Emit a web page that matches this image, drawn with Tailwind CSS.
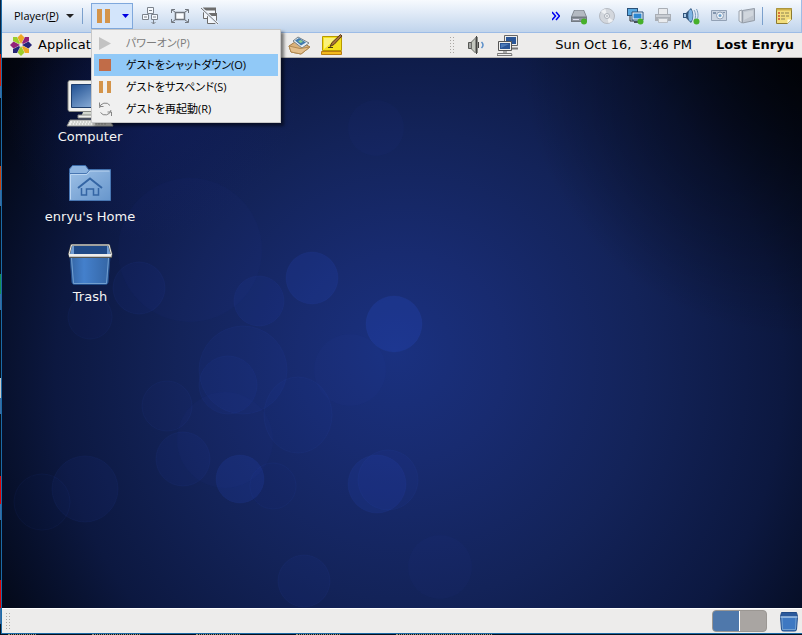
<!DOCTYPE html>
<html lang="ja">
<head>
    <meta charset="UTF-8">
    <meta name="viewport" content="width=device-width, initial-scale=1.0">
    <title>Player</title>
    <script src="https://cdn.jsdelivr.net/npm/@tailwindcss/browser@4"></script>
</head>
<body class="h-screen flex flex-col overflow-hidden bg-[#07101c] font-['DejaVu_Sans',sans-serif] text-[13px] text-black">
    <div class="flex flex-1 min-h-0">

        <!-- sliver of the host desktop -->
        <div class="w-px flex flex-col">
            <div class="h-[54px] bg-[#0b2340]"></div>
            <div class="h-8 bg-[#d81e05]"></div>
            <div class="h-3 bg-[#3a6ea5]"></div>
            <div class="h-[68px]"></div>
            <div class="h-6 bg-[#c8400a]"></div>
            <div class="h-4 bg-[#3a6ea5]"></div>
            <div class="h-[68px]"></div>
            <div class="h-5 bg-[#159050]"></div>
            <div class="h-4 bg-[#3a6ea5]"></div>
            <div class="h-[68px]"></div>
            <div class="h-5 bg-[#c8c8c8]"></div>
            <div class="h-4 bg-[#3a6ea5]"></div>
            <div class="h-[62px]"></div>
            <div class="h-7 bg-[#e00000]"></div>
            <div class="h-4 bg-[#3a6ea5]"></div>
            <div class="h-[60px]"></div>
            <div class="h-7 bg-[#e00000]"></div>
            <div class="h-4 bg-[#3a6ea5]"></div>
        </div>

        <div class="flex-1 min-w-0 flex flex-col border-l border-b border-[#1b6ba8]">

            <!-- player toolbar -->
            <header class="h-[33px] shrink-0 flex items-center justify-between pr-2 border-b border-r border-[#9dbce6] bg-linear-to-b from-[#f7fafe] to-[#c0d4ec]">
                <div class="flex items-center h-full">
                    <button class="flex items-center gap-[7px] pl-3 font-['Open_Sans',sans-serif] text-[11px]">
                        <span>Player(<u>P</u>)</span>
                        <svg class="w-2 h-1" viewBox="0 0 8 4"><path d="M0 0h8L4 4z" fill="#222"/></svg>
                    </button>
                    <div class="w-px h-4 mx-2 bg-[#7ba0cc]"></div>
                    <div class="relative">
                        <button class="flex items-center w-[42px] h-[26px] gap-3 pl-[5px] border border-[#7fa8dc] bg-[#d3e5fb]" aria-label="Power">
                            <svg class="w-[13px] h-3.5" viewBox="0 0 13 14"><path d="M0 0h5v14H0zM8 0h5v14H8z" fill="#d4944a"/></svg>
                            <svg class="w-[7px] h-1" viewBox="0 0 7 4"><path d="M0 0h7L3.500 4z" fill="#0000e0"/></svg>
                        </button>
                        <div class="absolute z-10 left-0 top-[26px] w-[190px] p-0.5 flex flex-col border border-[#c8c8c8] bg-[#f0f0f0] shadow-[3px_3px_3px_rgba(0,0,0,0.5)] font-['Open_Sans','Noto_Sans_CJK_JP',sans-serif] text-[11px] leading-[22px] [font-feature-settings:'palt']" role="menu">
                            <button class="flex items-center gap-3 px-1 text-[#7d7d7d]" role="menuitem" disabled>
                                <svg class="w-4 h-4" viewBox="0 0 16 16"><path d="M1 2l12 6.500L1 15z" fill="#c3c3c3"/></svg>
                                <span>パワーオン(P)</span>
                            </button>
                            <button class="flex items-center gap-3 px-1 bg-[#91c9f7]" role="menuitem">
                                <svg class="w-4 h-4" viewBox="0 0 16 16"><path d="M1 2h12v12H1z" fill="#c16c48"/></svg>
                                <span>ゲストをシャットダウン(O)</span>
                            </button>
                            <button class="flex items-center gap-3 px-1" role="menuitem">
                                <svg class="w-4 h-4" viewBox="0 0 16 16"><path d="M1 2h4v12H1zM9 2h4v12H9z" fill="#d4944a"/></svg>
                                <span>ゲストをサスペンド(S)</span>
                            </button>
                            <button class="flex items-center gap-3 px-1" role="menuitem">
                                <svg class="w-4 h-4" viewBox="0 0 16 16" fill="none" stroke="#858585"><path d="M1.500 7A5.800 5.800 0 0 1 12 4.500M1.500 1.500v4h4M13 9A5.800 5.800 0 0 1 2.500 11.500M13.500 15v-4h-4"/></svg>
                                <span>ゲストを再起動(R)</span>
                            </button>
                        </div>
                    </div>
                    <div class="flex items-center gap-3 pl-2">
                        <button aria-label="Ctrl+Alt+Del">
                            <svg class="w-[18px] h-[18px]" viewBox="0 0 18 18" fill="#f6f9fd" stroke="#7c838c"><path d="M6.500.5h6v6h-6zM1.500 7.500h6v5h-6zM10.500 7.500h6v5h-6z"/><path d="M8 3.500h3M3 10h3M12 10h3M12.500 13v4M10.500 15l2 2 2-2" fill="none"/></svg>
                        </button>
                        <button aria-label="Full screen">
                            <svg class="w-[18px] h-[18px]" viewBox="0 0 18 18" fill="none" stroke="#70767e"><path d="M4.500 5.500h9v7h-9z" fill="#fafcff" stroke-width="1.500"/><path d="M.5 6V2.500H4M14 2.500h3.500V6M17.500 12v3.500H14M4 15.500H.5V12M1 3l3 2M17 3l-3 2M1 15l3-2M17 15l-3-2"/></svg>
                        </button>
                        <button aria-label="Unity">
                            <svg class="w-[18px] h-[18px]" viewBox="0 0 18 18" fill="#f4f7fb" stroke="#6d6d6d"><path d="M2.500 1.500h12v10h-12z"/><path d="M2 2h13" stroke-width="3"/><path d="M6.500 6.500h9v10h-9z"/><path d="M6 7.500h10" stroke-width="3"/><path d="M0 1l17 16" stroke="#e8f0fa" stroke-width="3"/><path d="M0 1l17 16" stroke="#777"/></svg>
                        </button>
                    </div>
                </div>

                <div class="flex items-center gap-[10px]">
                    <button aria-label="More">
                        <svg class="w-2 h-2.5" viewBox="0 0 8 10" fill="none" stroke="#0000f0" stroke-width="1.500"><path d="M0 1l3.500 4L0 9M4 1l3.500 4L4 9"/></svg>
                    </button>
                    <button aria-label="Hard disk">
                        <svg class="w-[18px] h-[18px]" viewBox="0 0 18 18"><path d="M4 3h10l3 7v5H1v-5z" fill="#747b84"/><path d="M4.500 3.500h9l2.500 6H2z" fill="#b4bac2"/><path d="M2 11h14v3H2z" fill="#8d949d"/><path d="M3 12.500h6" stroke="#dde"/><circle cx="14" cy="14.500" r="3" fill="#46b02a"/></svg>
                    </button>
                    <button aria-label="CD/DVD">
                        <svg class="w-[18px] h-[18px]" viewBox="0 0 18 18"><circle cx="9" cy="9" r="7.500" fill="#d3d7dd" stroke="#b5bac2"/><path d="M9 9L3 4.500A7.500 7.500 0 0 1 7.500 2zM9 9l6 4.500a7.500 7.500 0 0 1-4.500 2.500z" fill="#eff1f4"/><circle cx="9" cy="9" r="2.500" fill="#f3f5f8" stroke="#aab0b9"/><circle cx="9" cy="9" r="1" fill="#b5bac2"/></svg>
                    </button>
                    <button aria-label="Network">
                        <svg class="w-[18px] h-[18px]" viewBox="0 0 18 18"><path d="M1 1h11v8H1z" fill="#2a5078"/><path d="M2 2h9v6H2z" fill="#58a8e0"/><path d="M4 9v5h4" stroke="#333" fill="none"/><path d="M6 5h11v8H6z" fill="#fff" stroke="#2a5078"/><path d="M7.500 6.500h8v5h-8z" fill="#2c86d0"/><path d="M8 14h6v2H8z" fill="#46505c"/><circle cx="14.500" cy="14.500" r="3" fill="#46b02a"/></svg>
                    </button>
                    <button aria-label="Printer">
                        <svg class="w-[18px] h-[18px]" viewBox="0 0 18 18"><path d="M4.500 1.500h9v6h-9z" fill="#e9ebee" stroke="#a9aeb5"/><path d="M1 7h16v7H1z" fill="#a9aeb5"/><path d="M2 8h14v2H2z" fill="#c9cdd3"/><path d="M4.500 11.500h9v4h-9z" fill="#e9ebee" stroke="#b9bec5"/></svg>
                    </button>
                    <button aria-label="Sound">
                        <svg class="w-[18px] h-[18px]" viewBox="0 0 18 18"><path d="M1 6h3l5-5c3 4 3 11 0 15l-5-5H1z" fill="#31557c"/><ellipse cx="8.500" cy="8.500" rx="2.200" ry="6" fill="#7eb4e4"/><path d="M2 7h2v3H2z" fill="#a9c9e6"/><path d="M12 3c2 3 2 8 0 11M14.500 2c2 4 2 9 0 12" fill="none" stroke="#7b9dbd"/><circle cx="14.500" cy="14.500" r="3" fill="#46b02a"/></svg>
                    </button>
                    <button aria-label="Camera">
                        <svg class="w-[18px] h-[18px]" viewBox="0 0 18 18"><path d="M1.500 3.500h15v10h-15z" fill="#cbd5e2" stroke="#92a1b5"/><path d="M3 5h3v2H3zM13 5h2v1h-2z" fill="#8295ad"/><circle cx="10" cy="8.500" r="3.500" fill="#eef2f7" stroke="#8fa0b6"/><circle cx="10" cy="8.500" r="1.500" fill="#6fa3ce"/></svg>
                    </button>
                    <button aria-label="Display">
                        <svg class="w-[18px] h-[18px]" viewBox="0 0 18 18"><path d="M1 4l3-1v13l-3-2z" fill="#e8ebef" stroke="#9ba3ad"/><path d="M4.500 3.500l12-2v12l-12 2.500z" fill="#bfc6cf" stroke="#939ba6"/><path d="M6 5l9-1.500v5L6 13z" fill="#d0d6dd"/></svg>
                    </button>
                    <div class="w-px h-[18px] -mx-1 bg-[#7ba0cc]"></div>
                    <button class="pl-1.5" aria-label="Notes">
                        <svg class="w-[18px] h-[18px]" viewBox="0 0 18 18"><path d="M1.500 1.500h15v11l-4 4h-11z" fill="#f3de7c" stroke="#8c7a30"/><path d="M1.500 1.500h15v2h-15z" fill="#cdb04a"/><path d="M3 6h2M3 9h2M3 12h2" stroke="#d24a2c" stroke-width="1.500"/><path d="M6 6h3M10 6h4M6 9h4M11 9h3M6 12h4" stroke="#8b8150"/><path d="M12.500 16.500v-4h4z" fill="#fffbe0"/></svg>
                    </button>
                </div>
            </header>

            <!-- top panel -->
            <div class="h-[25px] shrink-0 flex items-center justify-between px-2 border-b border-[#b4b2af] bg-[#edeceb]">
                <div class="flex items-center">
                    <svg class="w-[22px] h-[22px] shrink-0" viewBox="0 0 22 22">
                        <path d="M11 0l3.500 3.500L11 10 7.500 3.500z" fill="#efa724"/>
                        <path d="M22 11l-3.500 3.500L12 11l6.500-3.500z" fill="#262577"/>
                        <path d="M11 22l-3.500-3.500L11 12l3.500 6.500z" fill="#9ccd2a"/>
                        <path d="M0 11l3.500-3.500L10 11l-6.500 3.500z" fill="#932279"/>
                        <path d="M3 3h4l3 6-1 1-6-3z" fill="#9ccd2a"/>
                        <path d="M19 3h-4l-3 6 1 1 6-3z" fill="#932279"/>
                        <path d="M19 19h-4l-3-6 1-1 6 3z" fill="#efa724"/>
                        <path d="M3 19h4l3-6-1-1-6 3z" fill="#262577"/>
                    </svg>
                    <nav class="w-64 pl-1.5">
                        <button>Applications</button>
                    </nav>
                    <div class="flex items-center gap-2">
                        <button aria-label="Mail">
                            <svg class="w-6 h-[22px]" viewBox="0 0 24 22"><path d="M1 12L10 6l12 7-9 7-10-2z" fill="#d9b27c" stroke="#a37a42"/><path d="M5 7l5-4 11 6-7 5z" fill="#e8eef2" stroke="#76828a"/><path d="M7 6.500l4-2.500 7 4.500-5 3z" fill="#3f79ae"/><path d="M10 7l3-1 2 2-3 1z" fill="#8bd08f"/><path d="M1 12l11 2.500L22 13l-9 7-10-2z" fill="#e3bf8c" stroke="#b18a53"/></svg>
                        </button>
                        <button aria-label="Notes">
                            <svg class="w-6 h-[22px]" viewBox="0 0 24 22"><path d="M2.500 2.500h19v14h-19z" fill="#f5e11f" stroke="#b89a00"/><path d="M1.500 17.500h20v3h-20z" fill="#f2b91c" stroke="#b97c10"/><path d="M4 4h13L4 15z" fill="#fbf27a"/><path d="M10 12.500l2-4L20.500.5 22 2l-8 8.500z" fill="#a8713c" stroke="#5a3a1a"/><path d="M8 13.500h5" stroke="#4a3d10"/></svg>
                        </button>
                    </div>
                </div>
                <div class="flex items-center whitespace-nowrap">
                    <svg class="w-[5px] h-[17px] mr-3" viewBox="0 0 5 17"><path d="M.5 0v17M3.500 0v17" stroke="#aaa7a4" stroke-dasharray="1 2"/></svg>
                    <svg class="w-[18px] h-[20px] mr-3" viewBox="0 0 18 20"><path d="M1.500 7.500h4v6h-4z" fill="#a5a6a4" stroke="#555753"/><path d="M4.500 7l4-4v15l-4-4z" fill="#c3c7bf" stroke="#6b6d69"/><path d="M8 2h3v16H8z" fill="#888a85"/><path d="M9.500 1v18M11.500 7v6" stroke="#444"/><path d="M14.500 7c2 2 2 4 0 6" fill="none" stroke="#5b8fc9" stroke-width="1.500"/></svg>
                    <svg class="w-[22px] h-[22px] mr-9" viewBox="0 0 22 22"><path d="M7.500 1.500h13v10h-13z" fill="#eeeeec" stroke="#666"/><path d="M9 3h10v7H9z" fill="#2a5596"/><path d="M14 14.500h7" stroke="#777" stroke-width="2"/><path d="M1.500 7.500h13v9h-13z" fill="#eeeeec" stroke="#555"/><path d="M3 9h10v6H3z" fill="#2a5596"/><path d="M4 10h8l-8 4z" fill="#4c7ab8"/><path d="M6 17h4v2H6z" fill="#aaa"/><path d="M.5 19.500h14l.5 2H0z" fill="#eee" stroke="#777"/></svg>
                    <time class="mr-6 whitespace-pre">Sun Oct 16,  3:46 PM</time>
                    <span class="font-bold">Lost Enryu</span>
                </div>
            </div>

            <!-- desktop -->
            <main class="relative flex-1 min-h-0 bg-[#03060f]">
                <svg class="absolute inset-0 w-full h-full" viewBox="2 58 800 550" preserveAspectRatio="xMidYMid slice">
                    <defs>
                        <radialGradient id="glow" gradientUnits="userSpaceOnUse" cx="430" cy="385" fx="395" fy="350" r="520">
                            <stop offset="0" stop-color="#1a3180"/>
                            <stop offset=".2" stop-color="#182b70"/>
                            <stop offset=".45" stop-color="#132359"/>
                            <stop offset=".7" stop-color="#0c1840"/>
                            <stop offset=".85" stop-color="#060e26"/>
                            <stop offset="1" stop-color="#02040b"/>
                        </radialGradient>
                        <radialGradient id="haze">
                            <stop offset="0" stop-color="#16247a" stop-opacity=".4"/>
                            <stop offset="1" stop-color="#16247a" stop-opacity="0"/>
                        </radialGradient>
                        <radialGradient id="shade">
                            <stop offset="0" stop-color="#000" stop-opacity=".7"/>
                            <stop offset="1" stop-color="#000" stop-opacity="0"/>
                        </radialGradient>
                    </defs>
                    <rect x="2" y="58" width="800" height="550" fill="url(#glow)"/>
                    <circle cx="150" cy="90" r="150" fill="url(#haze)"/>
                    <circle cx="802" cy="58" r="280" fill="url(#shade)"/>
                    <g fill="#2848c0" fill-opacity=".07" stroke="#4468d8" stroke-opacity=".06">
                        <circle cx="139" cy="288" r="26"/>
                        <circle cx="312" cy="278" r="26" fill-opacity=".18"/>
                        <circle cx="259" cy="301" r="25" fill-opacity=".1"/>
                        <circle cx="394" cy="324" r="28" fill-opacity=".26"/>
                        <circle cx="243" cy="370" r="44"/>
                        <circle cx="228" cy="385" r="29"/>
                        <ellipse cx="298" cy="415" rx="34" ry="38" fill-opacity=".05"/>
                        <circle cx="167" cy="406" r="25" fill-opacity=".04"/>
                        <circle cx="183" cy="459" r="27"/>
                        <circle cx="240" cy="479" r="24" fill-opacity=".18"/>
                        <circle cx="273" cy="486" r="23" fill-opacity=".03"/>
                        <circle cx="377" cy="484" r="29" fill-opacity=".15"/>
                        <circle cx="388" cy="480" r="30"/>
                        <circle cx="304" cy="581" r="26"/>
                        <circle cx="85" cy="489" r="33"/>
                        <circle cx="42" cy="502" r="28" fill-opacity=".03"/>
                        <circle cx="90" cy="317" r="22" fill-opacity=".04"/>
                    </g>
                    <g fill="#2848c0" fill-opacity=".04">
                        <circle cx="225" cy="440" r="48"/>
                        <circle cx="350" cy="370" r="36"/>
                        <circle cx="190" cy="250" r="72"/>
                        <circle cx="440" cy="567" r="32"/>
                        <circle cx="376" cy="128" r="28"/>
                    </g>
                </svg>

                <div class="relative w-44 pt-[22px] flex flex-col items-center gap-3.5 text-[#f4f4f4] leading-[18px] [text-shadow:1px_1px_1px_#000]">
                    <button class="flex flex-col items-center">
                        <svg class="w-12 h-12" viewBox="0 0 48 48">
                            <defs><linearGradient id="lcd" x2="1" y2="1"><stop stop-color="#1f4f91"/><stop offset="1" stop-color="#a6c6ea"/></linearGradient></defs>
                            <rect x="2" y=".5" width="44" height="31" rx="2" fill="#f0f0ee" stroke="#888a85"/>
                            <path d="M5.500 4.500h37v23h-37z" fill="url(#lcd)" stroke="#20406e"/>
                            <path d="M17 32h14l2 5H15z" fill="#d3d7cf"/>
                            <path d="M12 35h25v3H12z" fill="#eeeeec" stroke="#888a85"/>
                            <path d="M4 40h40l3 6H1z" fill="#eeeeec" stroke="#888a85"/>
                            <path d="M6 42h33M5 44h35" stroke="#babdb6" stroke-dasharray="2 1"/>
                        </svg>
                        <span>Computer</span>
                    </button>
                    <button class="flex flex-col items-center">
                        <svg class="w-12 h-12" viewBox="0 0 48 48">
                            <defs><linearGradient id="dir" x2="1" y2="1"><stop stop-color="#9dc0e6"/><stop offset="1" stop-color="#6796cc"/></linearGradient></defs>
                            <path d="M3.500 40V9l3-3.500h13l3 4h22V40z" fill="#8db4e0" stroke="#3a6aa8"/>
                            <path d="M3.500 40.500V13.500h17l3-3.500h21v30.500z" fill="url(#dir)" stroke="#4876b2"/>
                            <path d="M4.500 39.500v-25h16.500l3-3.500h19.500" fill="none" stroke="#bcd6f2"/>
                            <path d="M12 28l12-9.500L36 28" fill="none" stroke="#3465a4" stroke-width="2"/>
                            <path d="M15.500 28v7h5v-6h7v6h5v-7" fill="none" stroke="#3465a4" stroke-width="1.500"/>
                        </svg>
                        <span>enryu's Home</span>
                    </button>
                    <button class="flex flex-col items-center">
                        <svg class="w-12 h-12" viewBox="0 0 48 48">
                            <defs><linearGradient id="bin" x2="1" y2="0"><stop stop-color="#3465a4"/><stop offset=".35" stop-color="#4480cc"/><stop offset="1" stop-color="#3465a4"/></linearGradient></defs>
                            <path d="M4 16h40l-2 26.500q-.5 2-2.500 2h-31q-2 0-2.500-2z" fill="url(#bin)" stroke="#204a87"/>
                            <path d="M5.500 18l2 25.500h33l2-25.500" fill="none" stroke="#729fcf"/>
                            <path d="M6 5h37l3 11H2.500z" fill="#204a87"/>
                            <path d="M6 5l2 1v8l-5 1zM43 5l-2 1v8l4 1z" fill="#6f9bd1"/>
                            <path d="M5.500 5h37.500l2.500 9-.5 3h-41l-1-3z" fill="none" stroke="#55554f" stroke-width="2"/>
                            <path d="M5.500 5h37.500l2.500 9.500h-42.500z" fill="none" stroke="#eeeeec"/>
                            <path d="M3 15.500h42.500" stroke="#eeeeec" stroke-width="2.500"/>
                        </svg>
                        <span>Trash</span>
                    </button>
                </div>
            </main>

            <!-- bottom panel -->
            <footer class="h-[25px] shrink-0 flex items-center justify-between pl-1 pr-[3px] border-t border-white bg-[#edeceb]">
                <svg class="w-[5px] h-[17px]" viewBox="0 0 5 17"><path d="M.5 0v17M3.500 0v17" stroke="#aaa7a4" stroke-dasharray="1 2"/></svg>
                <div class="flex items-center gap-3">
                    <div class="flex w-[55px] h-[22px] rounded-sm overflow-hidden border border-[#9b9793] divide-x divide-white bg-[#a9a5a2]">
                        <button class="flex-1 bg-[#4f78ab]" aria-label="Workspace 1"></button>
                        <button class="flex-1" aria-label="Workspace 2"></button>
                    </div>
                    <button aria-label="Trash">
                        <svg class="w-5 h-[22px]" viewBox="0 0 20 22"><path d="M1.500 6.500h17l-1 13q0 1.500-2 1.500h-11q-2 0-2-1.500z" fill="#3e78c2" stroke="#204a87"/><path d="M3 8l.5 11.500h13L17 8" fill="none" stroke="#729fcf"/><path d="M2.500 2.500h15l1 4h-17z" fill="#2a599c" stroke="#204a87"/><path d="M1.500 7h17" stroke="#a9c8ea" stroke-width="1.500"/></svg>
                    </button>
                </div>
            </footer>
        </div>
    </div>
    <div class="h-px flex gap-14 pl-2">
        <div class="w-7 border-t border-dotted border-[#a09070]"></div>
        <div class="w-12 border-t border-dotted border-[#a09070]"></div>
        <div class="w-11 border-t border-dotted border-[#a09070]"></div>
        <div class="w-11 border-t border-dotted border-[#a09070]"></div>
        <div class="w-24 border-t border-dotted border-[#a09070]"></div>
    </div>
</body>
</html>
